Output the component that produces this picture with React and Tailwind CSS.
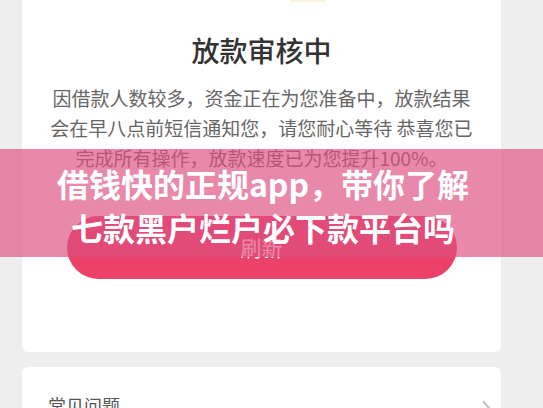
export default function App() {
  return (
    <div className="relative h-[408px] w-[543px] overflow-hidden bg-[#eeeeee] font-['Noto_Sans_CJK_SC',sans-serif]">
      {/* status card */}
      <div className="ml-[22px] flex h-[352px] w-[479px] flex-col items-center rounded-b-[6px] bg-white">
        <div className="ml-[268px] h-[2px] w-[36px] self-start rounded-b-full bg-[#f8f3de]" />
        <h1 className="mt-[28px] text-[28px] leading-[40px] font-medium text-[#333333]">
          放款审核中
        </h1>
        <p className="mt-[13px] w-[425px] text-center text-[19px] leading-[30px] text-[#666666]">
          因借款人数较多，资金正在为您准备中，放款结果会在早八点前短信通知您，请您耐心等待 恭喜您已完成所有操作，放款速度已为您提升100%。
        </p>
        <button
          type="button"
          className="mt-[43px] flex h-[63px] w-[390px] items-center justify-center rounded-full bg-[#ec4169] text-[21px] text-white"
        >
          刷新
        </button>
      </div>

      {/* faq card */}
      <div className="mt-[15px] ml-[22px] flex h-[60px] w-[479px] items-start justify-between rounded-[6px] bg-white pt-[25px] pr-[10px] pl-[26px]">
        <span className="text-[18px] leading-[26px] text-[#555555]">常见问题</span>
        <svg width="10" height="18" viewBox="0 0 10 18" className="mt-[7px]">
          <path d="M2 2 L8 9 L2 16" fill="none" stroke="#c4c4c4" strokeWidth="2" />
        </svg>
      </div>

      {/* title overlay */}
      <div className="absolute top-[149px] left-0 flex h-[108px] w-full flex-col items-center justify-center bg-[rgba(221,79,128,0.67)] pt-[4px] pr-[17px] text-[32px] leading-[44px] font-bold text-white">
        <div>借钱快的正规app，带你了解</div>
        <div>七款黑户烂户必下款平台吗</div>
      </div>
    </div>
  );
}
